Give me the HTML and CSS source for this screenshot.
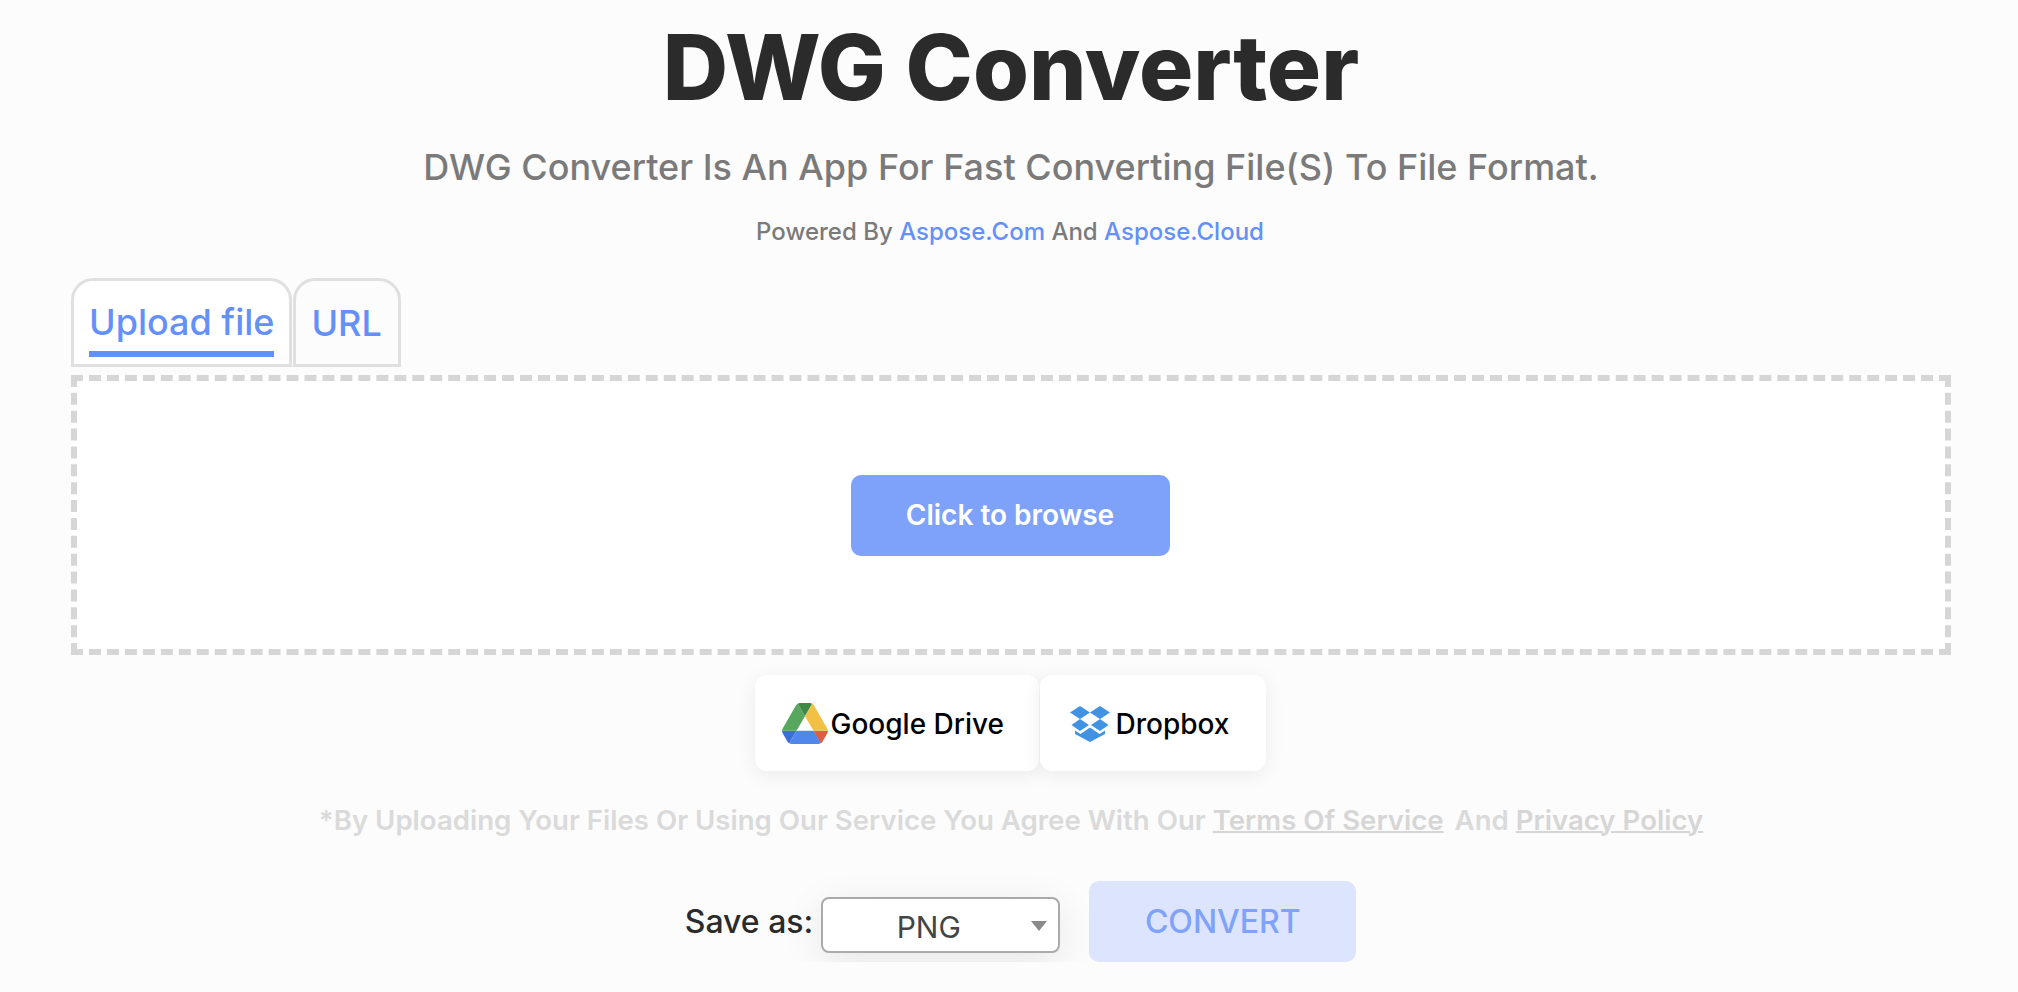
FILE: index.html
```html
<!DOCTYPE html>
<html lang="en">

<head>
    <meta charset="UTF-8">
    <meta name="viewport" content="width=device-width, initial-scale=1.0">
    <title>DWG Converter</title>
    <link rel="stylesheet" href="styles.css">
</head>

<body>

    <div class="converter">
        <h1>DWG Converter</h1>
        <p class="subtitle">DWG Converter Is An App For Fast Converting File(S) To File Format.</p>
        <p class="powered">Powered By <a href="#">Aspose.Com</a> And <a href="#">Aspose.Cloud</a></p>

        <div class="tabs">
            <div class="tab active"><span>Upload file</span></div>
            <div class="tab tab-url"><span>URL</span></div>
        </div>

        <div class="dropzone">
            <button class="browse-button">Click to browse</button>
        </div>

        <div class="sources">
            <div class="source source-drive">
                <svg class="drive-icon" viewBox="0 0 87.3 78" aria-hidden="true">
                    <path d="m6.6 66.85 3.85 6.65c.8 1.4 1.95 2.5 3.3 3.3l13.75-23.8h-27.5c0 1.55.4 3.1 1.2 4.5z" fill="#3a6fd3" />
                    <path d="m43.65 25-13.75-23.8c-1.35.8-2.5 1.9-3.3 3.3l-25.4 44a9.06 9.06 0 0 0 -1.2 4.5h27.5z" fill="#58a75f" />
                    <path d="m73.55 76.8c1.35-.8 2.5-1.9 3.3-3.3l1.6-2.75 7.65-13.25c.8-1.4 1.2-2.95 1.2-4.5h-27.502l5.852 11.5z" fill="#df5c45" />
                    <path d="m43.65 25 13.75-23.8c-1.35-.8-2.9-1.2-4.5-1.2h-18.5c-1.6 0-3.15.45-4.5 1.2z" fill="#3c8a46" />
                    <path d="m59.8 53h-32.3l-13.75 23.8c1.35.8 2.9 1.2 4.5 1.2h50.8c1.6 0 3.15-.45 4.5-1.2z" fill="#5087ec" />
                    <path d="m73.4 26.5-12.7-22c-.8-1.4-1.95-2.5-3.3-3.3l-13.75 23.8 16.15 28h27.45c0-1.55-.4-3.1-1.2-4.5z" fill="#f3c046" />
                </svg>
                <span>Google Drive</span>
            </div>
            <div class="source source-dropbox">
                <svg class="dropbox-icon" viewBox="0 0 40 36" aria-hidden="true">
                    <path d="M10 0 0 6.500 10 13l10-6.500z" fill="#4292e4" />
                    <path d="M30 0 20 6.500 30 13l10-6.500z" fill="#4292e4" />
                    <path d="M10 13 1.500 19 10 25l9-6z" fill="#4292e4" />
                    <path d="M30 13l-9 6 9 6 8.500-6z" fill="#4292e4" />
                    <path d="M20 21.500 10.500 28 5 24.500V28l15 8 15-8v-3.500L29.500 28z" fill="#4292e4" />
                </svg>
                <span>Dropbox</span>
            </div>
        </div>

        <p class="terms">*By Uploading Your Files Or Using Our Service You Agree With Our <a class="terms-link" href="#">Terms Of Service</a> And <a href="#">Privacy Policy</a></p>

        <div class="save-row">
            <label class="save-label" for="format">Save as:</label>
            <div class="select-wrap">
                <select id="format" class="format-select">
                    <option>PNG</option>
                    <option>PDF</option>
                    <option>JPG</option>
                </select>
            </div>
            <button class="convert-button">CONVERT</button>
        </div>
    </div>

</body>

</html>
```

FILE: styles.css
```css
* {
    box-sizing: border-box;
}

body {
    margin: 0;
    background-color: #fcfcfc;
    font-family: 'Inter', sans-serif;
}

.converter {
    margin: 0 67px 0 71px;
    text-align: center;
}

h1 {
    margin: 0;
    padding-top: 13px;
    font-size: 90.5px;
    line-height: 108px;
    font-weight: 800;
    color: #2b2b2b;
}

.subtitle {
    margin: 25px 0 0;
    font-size: 36px;
    line-height: 42px;
    font-weight: 500;
    color: #7a7a7a;
}

.powered {
    margin: 29px 2px 0 0;
    font-size: 24px;
    line-height: 30px;
    font-weight: 500;
    color: #7a7a7a;
}

.powered a {
    color: #6390fa;
    text-decoration: none;
}

.tabs {
    display: flex;
    margin-top: 31px;
    gap: 1px;
}

.tab {
    height: 89px;
    padding: 0 15px;
    border: 3px solid #e0e0e0;
    border-radius: 22px 22px 0 0;
    font-size: 36px;
    font-weight: 500;
    line-height: 84px;
    color: #6390fa;
}

.tab span {
    display: block;
}

.tab.active {
    background-color: #ffffff;
}

.tab.active span {
    height: 76px;
    border-bottom: 6px solid #6390fa;
    line-height: 82px;
}

.tab-url {
    padding-right: 16px;
}

.dropzone {
    display: flex;
    align-items: center;
    justify-content: center;
    height: 280px;
    margin-top: 8px;
    background-color: #ffffff;
    border: 6px dashed #d6d6d6;
}

.browse-button {
    width: 319px;
    height: 81px;
    margin-right: 2px;
    border: none;
    border-radius: 10px;
    background-color: #7ea1fa;
    color: #ffffff;
    font-family: inherit;
    font-size: 28px;
    font-weight: 600;
}

.sources {
    display: flex;
    justify-content: center;
    margin-top: 20px;
    padding-right: 2px;
    gap: 1px;
}

.source {
    display: flex;
    align-items: center;
    height: 96px;
    padding-top: 1px;
    background-color: #ffffff;
    border-radius: 12px;
    box-shadow: 0 4px 20px rgba(0, 0, 0, 0.07);
    font-size: 28px;
    font-weight: 500;
    color: #000000;
}

.source-drive {
    width: 284px;
    padding-left: 27px;
    gap: 3px;
}

.source-dropbox {
    width: 226px;
    padding-left: 30px;
    gap: 6px;
}

.drive-icon {
    width: 46px;
    height: 41px;
}

.dropbox-icon {
    width: 40px;
    height: 36px;
}

.terms {
    margin: 32px 0 0;
    font-size: 27.6px;
    line-height: 34px;
    font-weight: 600;
    color: #dadada;
}

.terms a {
    color: #d6d6d6;
    text-decoration-thickness: 2px;
}

.terms-link {
    margin-right: 4px;
}

.save-row {
    display: flex;
    align-items: center;
    justify-content: center;
    margin-top: 44px;
    padding-left: 19px;
}

.save-label {
    margin-right: 8px;
    font-size: 32px;
    font-weight: 500;
    color: #2b2b2b;
}

.select-wrap {
    position: relative;
    margin-top: 6px;
    margin-right: 29px;
}

.select-wrap::after {
    content: "";
    position: absolute;
    top: 24px;
    right: 13px;
    border-left: 8px solid transparent;
    border-right: 8px solid transparent;
    border-top: 10px solid #8a8a8a;
}

.format-select {
    appearance: none;
    display: block;
    width: 239px;
    height: 56px;
    padding: 4px 24px 0 0;
    background-color: #ffffff;
    border: 2px solid #aaaaaa;
    border-radius: 8px;
    box-shadow: 0 10px 40px rgba(0, 0, 0, 0.09);
    font-family: inherit;
    font-size: 30px;
    color: #444444;
    text-align: center;
}

.convert-button {
    width: 267px;
    height: 81px;
    border: none;
    border-radius: 10px;
    background-color: #dce5fd;
    color: #7fa2fb;
    font-family: inherit;
    font-size: 32px;
    font-weight: 500;
}
```
